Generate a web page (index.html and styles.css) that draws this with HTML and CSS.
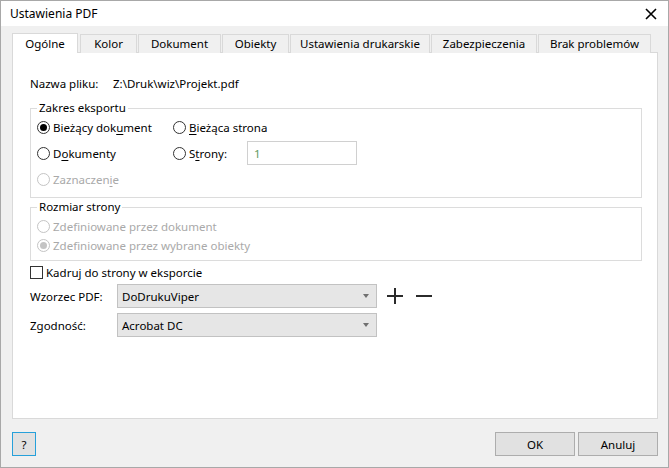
FILE: index.html
```html
<!DOCTYPE html>
<html lang="pl">
<head>
<meta charset="utf-8">
<title>Ustawienia PDF</title>
<link rel="stylesheet" href="styles.css">
</head>
<body>
<div class="window">
  <div class="titlebar">
    <span class="title">Ustawienia PDF</span>
    <svg class="close" width="12" height="12" viewBox="0 0 12 12"><path d="M1 1 L11 11 M11 1 L1 11" stroke="#000" stroke-width="1.6" fill="none"/></svg>
  </div>
  <div class="body">
    <div class="tabs">
      <div class="tab active t1">Ogólne</div>
      <div class="tab t2">Kolor</div>
      <div class="tab t3">Dokument</div>
      <div class="tab t4">Obiekty</div>
      <div class="tab t5">Ustawienia drukarskie</div>
      <div class="tab t6">Zabezpieczenia</div>
      <div class="tab t7">Brak problemów</div>
    </div>
    <div class="panel">
      <div class="row file-row">
        <span class="lbl file-lbl">Nazwa pliku:</span>
        <span>Z:\Druk\wiz\Projekt.pdf</span>
      </div>

      <fieldset class="group group-range">
        <legend>Zakres eksportu</legend>
        <div class="range-grid">
          <label class="radio checked"><span class="circle"></span><span>Bieżący dok<u>u</u>ment</span></label>
          <label class="radio"><span class="circle"></span><span><u>B</u>ieżąca strona</span></label>
          <label class="radio"><span class="circle"></span><span>D<u>o</u>kumenty</span></label>
          <div class="strony">
            <label class="radio strony-radio"><span class="circle"></span><span>S<u>t</u>rony:</span></label>
            <div class="input">1</div>
          </div>
          <label class="radio disabled"><span class="circle"></span><span>Zaznaczen<u>i</u>e</span></label>
        </div>
      </fieldset>

      <fieldset class="group group-size">
        <legend>Rozmiar strony</legend>
        <div class="size-list">
          <label class="radio disabled"><span class="circle"></span><span>Zdefiniowane przez dokument</span></label>
          <label class="radio disabled checked"><span class="circle"></span><span>Zdefiniowane przez wybrane obiekty</span></label>
        </div>
      </fieldset>

      <label class="row check-row"><span class="box"></span><span>Kadruj do strony w eksporcie</span></label>

      <div class="row select-row preset-row">
        <span class="lbl sel-lbl">Wzorzec PDF:</span>
        <div class="select"><span>DoDrukuViper</span><span class="arrow"></span></div>
        <svg class="icon-btn" width="16" height="16" viewBox="0 0 16 16"><path d="M0 8 H16 M8 0 V16" stroke="#2b2b2b" stroke-width="2" fill="none"/></svg>
        <svg class="icon-btn" width="16" height="16" viewBox="0 0 16 16"><path d="M0 8 H16" stroke="#2b2b2b" stroke-width="2" fill="none"/></svg>
      </div>

      <div class="row select-row compat-row">
        <span class="lbl sel-lbl">Zgodność:</span>
        <div class="select"><span>Acrobat DC</span><span class="arrow"></span></div>
      </div>
    </div>
    <div class="footer">
      <button class="btn help">?</button>
      <div class="spacer"></div>
      <button class="btn wide">OK</button>
      <button class="btn wide">Anuluj</button>
    </div>
  </div>
</div>
</body>
</html>
```
FILE: styles.css
```css
* { box-sizing: border-box; }
html, body { margin: 0; padding: 0; }
body {
  width: 669px;
  height: 468px;
  font-family: "Noto Sans", "Open Sans", sans-serif;
  font-size: 11.5px;
  color: #000;
  background: #f0f0f0;
  overflow: hidden;
}
.window {
  width: 669px;
  height: 468px;
  border: 1px solid #a8a8a8;
  display: flex;
  flex-direction: column;
  background: #f0f0f0;
}
.titlebar {
  height: 25px;
  background: #fff;
  display: flex;
  align-items: center;
  padding: 0 11px 0 9px;
  flex: none;
}
.title { font-size: 12px; flex: 1; }
.close { display: block; }
.body {
  flex: 1;
  padding: 7px 10px 0 11px;
  display: flex;
  flex-direction: column;
}
.tabs {
  display: flex;
  align-items: flex-end;
  gap: 1px;
  height: 20px;
  margin-bottom: -1px;
  position: relative;
  z-index: 1;
}
.tab {
  height: 19px;
  border: 1px solid #d9d9d9;
  border-bottom: none;
  background: #f0f0f0;
  display: flex;
  align-items: center;
  justify-content: center;
  padding-bottom: 1px;
  white-space: nowrap;
}
.tab.active {
  height: 20px;
  background: #fff;
  margin-right: 1px;
}
.t1 { width: 66px; }
.t2 { width: 57px; }
.t3 { width: 83px; }
.t4 { width: 67px; }
.t5 { width: 140px; }
.t6 { width: 106px; }
.t7 { width: 113px; }

.panel {
  height: 367px;
  flex: none;
  background: #fff;
  border: 1px solid #d9d9d9;
  padding: 21px 15px 0 17px;
  display: flex;
  flex-direction: column;
}
.row { display: flex; align-items: center; height: 18px; }
.file-lbl { width: 83px; }

.group {
  margin: 0;
  border: 1px solid #dcdcdc;
  min-width: 0;
}
.group legend {
  padding: 0 2px;
  line-height: 16px;
  height: 16px;
}
.group-range { margin-top: 8px; padding: 2px 8px 9px 6px; }
.group-size { margin-top: 1px; padding: 2px 8px 6px 6px; }

.range-grid {
  display: grid;
  grid-template-columns: 136px 1fr;
  grid-auto-rows: 18px;
  row-gap: 8px;
}
.size-list { display: flex; flex-direction: column; gap: 1px; }

.radio {
  display: flex;
  align-items: center;
  gap: 3px;
  height: 18px;
  white-space: nowrap;
}
.circle {
  width: 13px;
  height: 13px;
  border: 1px solid #333;
  border-radius: 50%;
  background: #fff;
  position: relative;
  flex: none;
}
.radio.checked .circle::after {
  content: "";
  position: absolute;
  inset: 2px;
  border-radius: 50%;
  background: #000;
}
.radio.disabled { color: #a9a9a9; }
.radio.disabled .circle { border-color: #c4c4c4; }
.radio.disabled.checked .circle::after { background: #c4c4c4; }
u { text-decoration: underline; text-underline-offset: 2px; }

.strony { display: flex; align-items: center; }
.strony-radio { width: 74px; }
.input {
  width: 110px;
  height: 24px;
  margin: -3px 0;
  border: 1px solid #d0d0d0;
  background: #fff;
  color: #5f9a5f;
  padding-left: 6px;
  display: flex;
  align-items: center;
}

.check-row { margin-top: 2px; gap: 3px; }
.box {
  width: 13px;
  height: 13px;
  border: 1px solid #333;
  background: #fff;
  flex: none;
}

.select-row { height: 24px; }
.preset-row { margin-top: 3px; }
.compat-row { margin-top: 5px; }
.sel-lbl { width: 87px; }
.select {
  width: 260px;
  height: 24px;
  border: 1px solid #c2c2c2;
  background: #e6e6e6;
  display: flex;
  align-items: center;
  justify-content: space-between;
  padding: 0 4px 0 4px;
}
.arrow {
  width: 0;
  height: 0;
  border-left: 3.5px solid transparent;
  border-right: 3.5px solid transparent;
  border-top: 4px solid #707070;
  margin-right: 3px;
}
.icon-btn { display: block; flex: none; margin-left: 10px; }
.icon-btn + .icon-btn { margin-left: 13px; }

.footer {
  display: flex;
  align-items: center;
  gap: 3px;
  margin-top: 13px;
  padding-right: 0;
}
.spacer { flex: 1; }
.btn {
  font-family: inherit;
  font-size: 11.5px;
  height: 24px;
  background: #e1e1e1;
  border: 1px solid #adadad;
  color: #000;
  padding: 0;
  margin: 0;
}
.btn.help { width: 24px; border-color: #26a0da; }
.btn.wide { width: 80px; }
.footer .btn:last-child { margin-right: 0; }
```
